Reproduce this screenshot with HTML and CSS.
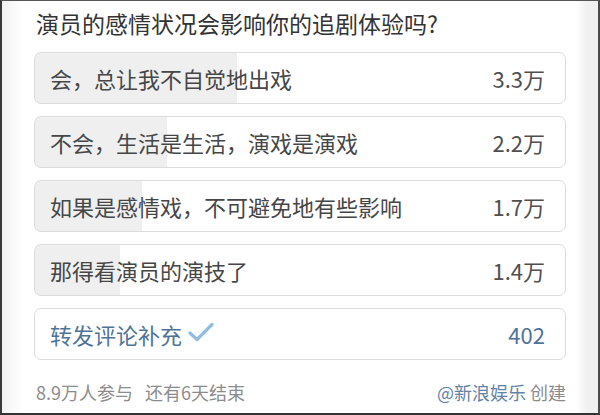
FILE: index.html
```html
<!DOCTYPE html>
<html lang="zh-CN">
<head>
<meta charset="utf-8">
<title>投票</title>
<link rel="stylesheet" href="styles.css">
</head>
<body>
<div class="frame">
  <div class="title">演员的感情状况会影响你的追剧体验吗?</div>
  <div class="options">
    <div class="option" style="--p:38.2%"><span class="label">会，总让我不自觉地出戏</span><span class="count">3.3万</span></div>
    <div class="option" style="--p:24.9%"><span class="label">不会，生活是生活，演戏是演戏</span><span class="count">2.2万</span></div>
    <div class="option" style="--p:20.1%"><span class="label">如果是感情戏，不可避免地有些影响</span><span class="count">1.7万</span></div>
    <div class="option" style="--p:16%"><span class="label">那得看演员的演技了</span><span class="count">1.4万</span></div>
    <div class="option option-repost">
      <span class="label repost">转发评论补充
        <svg class="check" width="26" height="20" viewBox="0 0 26 20"><path d="M2 11 L9 17.5 L24 2.5" fill="none" stroke="#92bde3" stroke-width="3.2" stroke-linecap="round" stroke-linejoin="round"/></svg>
      </span>
      <span class="count repost">402</span>
    </div>
  </div>
  <div class="footer">
    <span class="meta">8.9万人参与<span class="gap"></span>还有6天结束</span>
    <span class="creator"><span class="at">@新浪娱乐</span> 创建</span>
  </div>
</div>
</body>
</html>
```
FILE: styles.css
```css
html, body {
  margin: 0;
  padding: 0;
}
body {
  font-family: "Noto Sans CJK SC", "Noto Sans", sans-serif;
  background: #fff;
}
.frame {
  box-sizing: border-box;
  width: 600px;
  height: 415px;
  border-left: 2px solid #3a3a3a;
  border-top: 1px solid #555;
  border-right: 2px solid #4a4a4a;
  border-bottom: 2px solid #333;
  background: linear-gradient(to right, #f3f3f3 0, #fbfbfb 14px, #fff 22px, #fff 574px, #f1f1f1 584px, #f0f0f0 100%);
  padding: 7px 0 0 32px;
  display: flex;
  flex-direction: column;
  overflow: hidden;
}
.title {
  font-size: 23px;
  line-height: 30px;
  color: #333;
  padding-left: 2px;
}
.options {
  margin-top: 14px;
  display: flex;
  flex-direction: column;
  gap: 12px;
  width: 532px;
}
.option {
  box-sizing: border-box;
  height: 52px;
  border: 1px solid #dcdcdc;
  border-radius: 7px;
  background: linear-gradient(to right, #efefef 0, #efefef var(--p, 0%), #fff var(--p, 0%), #fff 100%);
  display: flex;
  align-items: center;
  justify-content: space-between;
  padding: 0 20px 0 15px;
  font-size: 22px;
  color: #464646;
}
.label {
  display: flex;
  align-items: center;
}
.count {
  color: #505050;
}
.repost {
  color: #4f7398;
}
.check {
  margin-left: 6px;
  margin-top: -4px;
}
.footer {
  margin-top: 20px;
  width: 532px;
  display: flex;
  justify-content: space-between;
  font-size: 18px;
  line-height: 24px;
  color: #8c8c8c;
  padding-left: 2px;
  box-sizing: border-box;
}
.gap {
  display: inline-block;
  width: 12px;
}
.at {
  color: #6283a5;
}
```
